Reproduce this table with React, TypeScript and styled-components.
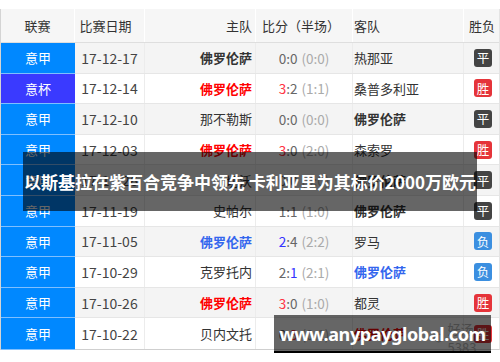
import React from "react";
import styled, { createGlobalStyle } from "styled-components";

const Global = createGlobalStyle`
  html, body { margin: 0; padding: 0; background: #fff; }
  body { font-family: "Noto Sans CJK SC", "Noto Sans", sans-serif; color: #333; }
`;

const COLS = "74px 70px 111px 97px 111px 36px";

const Page = styled.div`
  position: relative;
  width: 500px;
  height: 362px;
  padding-top: 9px;
  box-sizing: border-box;
  overflow: hidden;
`;

const Table = styled.div`
  width: 500px;
  box-sizing: border-box;
  border-left: 1px solid #d4d4d4;
  border-right: 1px solid #e4e4e4;
  border-bottom: 1px solid #cfcfcf;
`;

const HeaderRow = styled.div`
  display: grid;
  grid-template-columns: ${COLS};
  height: 34px;
  background: #f6f6f6;
  border-bottom: 1px solid #dedede;
  box-sizing: border-box;
  font-size: 13px;
  color: #333;
`;

const HeadCell = styled.div<{ $align?: string; $pad?: string }>`
  display: flex;
  align-items: center;
  justify-content: ${(p) => p.$align || "center"};
  padding: ${(p) => p.$pad || "0"};
  border-right: 1px solid #fff;
  box-sizing: border-box;
  &:last-child { border-right: none; }
`;

const Row = styled.div<{ $alt: boolean }>`
  display: grid;
  grid-template-columns: ${COLS};
  height: 30.6px;
  background: ${(p) => (p.$alt ? "#f4f4f4" : "#fff")};
  border-bottom: 1px solid #e6e6e6;
  box-sizing: border-box;
  font-size: 13px;
  &:last-child { border-bottom: none; }
`;

const Cell = styled.div<{ $align?: string; $pad?: string }>`
  display: flex;
  align-items: center;
  justify-content: ${(p) => p.$align || "center"};
  padding: ${(p) => p.$pad || "0"};
  border-right: 1px solid #ececec;
  box-sizing: border-box;
  white-space: nowrap;
  &:last-child { border-right: none; }
`;

const League = styled(Cell)<{ $cup: boolean }>`
  background: ${(p) => (p.$cup ? "#3a3aff" : "#0088ff")};
  color: #fff;
  border-right: none;
  margin-bottom: -1px;
  border-bottom: 1px solid #7fbfff;
`;

const DateCell = styled(Cell)`
  font-size: 14px;
  color: #444;
`;

const Team = styled.span<{ $tone: "plain" | "dark" | "red" | "blue" }>`
  font-weight: ${(p) => (p.$tone === "plain" ? 400 : 700)};
  color: ${(p) =>
    p.$tone === "red" ? "#ff0000" : p.$tone === "blue" ? "#3366ee" : "#333"};
`;

const Score = styled.span`
  color: #666;
  font-size: 13.5px;
`;

const Digit = styled.span<{ $c?: string }>`
  color: ${(p) => p.$c || "#666"};
`;

const Half = styled.span`
  color: #aaa;
  margin-left: 4px;
`;

const Badge = styled.span<{ $kind: "平" | "胜" | "负" }>`
  width: 18px;
  height: 18px;
  border-radius: 3px;
  display: flex;
  align-items: center;
  justify-content: center;
  font-size: 12.5px;
  color: #fff;
  margin-left: 2px;
  background: ${(p) =>
    p.$kind === "胜" ? "#e5343a" : p.$kind === "负" ? "#3b8fe0" : "#444"};
`;

const Banner = styled.div`
  position: absolute;
  left: 23px;
  top: 152px;
  width: 454px;
  height: 59px;
  background: rgba(0, 0, 0, 0.6);
  display: flex;
  align-items: center;
  padding-left: 1px;
  box-sizing: border-box;
  color: #fff;
  font-weight: 700;
  font-size: 17px;
  white-space: nowrap;
`;

const Watermark = styled.div`
  position: absolute;
  left: 433px;
  top: 319px;
  font-size: 13px;
  color: #b8b8b8;
  display: flex;
  align-items: center;
  gap: 3px;
`;

const UrlBanner = styled.div`
  position: absolute;
  left: 274px;
  top: 315px;
  width: 217px;
  height: 38px;
  background: rgba(0, 0, 0, 0.6);
  border-bottom: 2px solid #000;
  box-sizing: border-box;
  display: flex;
  align-items: center;
  justify-content: center;
  padding-top: 2px;
  color: #fff;
  font-family: "Noto Sans", sans-serif;
  font-weight: 700;
  font-size: 18px;
  letter-spacing: -0.4px;
`;

type Tone = "plain" | "dark" | "red" | "blue";
type M = {
  l: string;
  d: string;
  h: string;
  ht: Tone;
  s: [string, string];
  sc: [string?, string?];
  hf: string;
  a: string;
  at: Tone;
  r: "平" | "胜" | "负";
};

const RED = "#ff3344";
const BLU = "#3333ff";

const rows: M[] = [
  { l: "意甲", d: "17-12-17", h: "佛罗伦萨", ht: "dark", s: ["0", "0"], sc: [], hf: "0:0", a: "热那亚", at: "plain", r: "平" },
  { l: "意杯", d: "17-12-14", h: "佛罗伦萨", ht: "red", s: ["3", "2"], sc: [RED], hf: "1:1", a: "桑普多利亚", at: "plain", r: "胜" },
  { l: "意甲", d: "17-12-10", h: "那不勒斯", ht: "plain", s: ["0", "0"], sc: [], hf: "0:0", a: "佛罗伦萨", at: "dark", r: "平" },
  { l: "意甲", d: "17-12-03", h: "佛罗伦萨", ht: "red", s: ["3", "0"], sc: [RED], hf: "2:0", a: "森索罗", at: "plain", r: "胜" },
  { l: "意甲", d: "17-11-26", h: "切沃", ht: "plain", s: ["0", "0"], sc: [], hf: "0:0", a: "佛罗伦萨", at: "dark", r: "平" },
  { l: "意甲", d: "17-11-19", h: "史帕尔", ht: "plain", s: ["1", "1"], sc: [], hf: "1:0", a: "佛罗伦萨", at: "dark", r: "平" },
  { l: "意甲", d: "17-11-05", h: "佛罗伦萨", ht: "blue", s: ["2", "4"], sc: [BLU], hf: "2:2", a: "罗马", at: "plain", r: "负" },
  { l: "意甲", d: "17-10-29", h: "克罗托内", ht: "plain", s: ["2", "1"], sc: [undefined, BLU], hf: "2:1", a: "佛罗伦萨", at: "blue", r: "负" },
  { l: "意甲", d: "17-10-26", h: "佛罗伦萨", ht: "red", s: ["3", "0"], sc: [RED], hf: "1:0", a: "都灵", at: "plain", r: "胜" },
  { l: "意甲", d: "17-10-22", h: "贝内文托", ht: "plain", s: ["0", "3"], sc: [undefined, RED], hf: "0:1", a: "佛罗伦萨", at: "red", r: "胜" },
];

export default function App() {
  return (
    <>
      <Global />
      <Page>
        <Table>
          <HeaderRow>
            <HeadCell>联赛</HeadCell>
            <HeadCell $pad="0 8px 0 0">比赛日期</HeadCell>
            <HeadCell $align="flex-end" $pad="0 3px 0 0">主队</HeadCell>
            <HeadCell $pad="0 6px 0 0">比分（半场）</HeadCell>
            <HeadCell $align="flex-start" $pad="0 0 0 1px">客队</HeadCell>
            <HeadCell>胜负</HeadCell>
          </HeaderRow>
          {rows.map((m, i) => (
            <Row key={i} $alt={i % 2 === 0}>
              <League $cup={m.l === "意杯"}>{m.l}</League>
              <DateCell>{m.d}</DateCell>
              <Cell $align="flex-end" $pad="0 3px 0 0">
                <Team $tone={m.ht}>{m.h}</Team>
              </Cell>
              <Cell>
                <Score>
                  <Digit $c={m.sc[0]}>{m.s[0]}</Digit>:
                  <Digit $c={m.sc[1]}>{m.s[1]}</Digit>
                  <Half>({m.hf})</Half>
                </Score>
              </Cell>
              <Cell $align="flex-start" $pad="0 0 0 1px">
                <Team $tone={m.at}>{m.a}</Team>
              </Cell>
              <Cell>
                <Badge $kind={m.r}>{m.r}</Badge>
              </Cell>
            </Row>
          ))}
        </Table>
        <Banner>以斯基拉在紫百合竞争中领先 卡利亚里为其标价2000万欧元</Banner>
        <Watermark>
          <svg width="12" height="12" viewBox="0 0 12 12">
            <circle cx="6" cy="6" r="4" fill="none" stroke="#c4c4c4" strokeWidth="1.2" />
          </svg>
          好汤5383
        </Watermark>
        <UrlBanner>www.anypayglobal.com</UrlBanner>
      </Page>
    </>
  );
}
